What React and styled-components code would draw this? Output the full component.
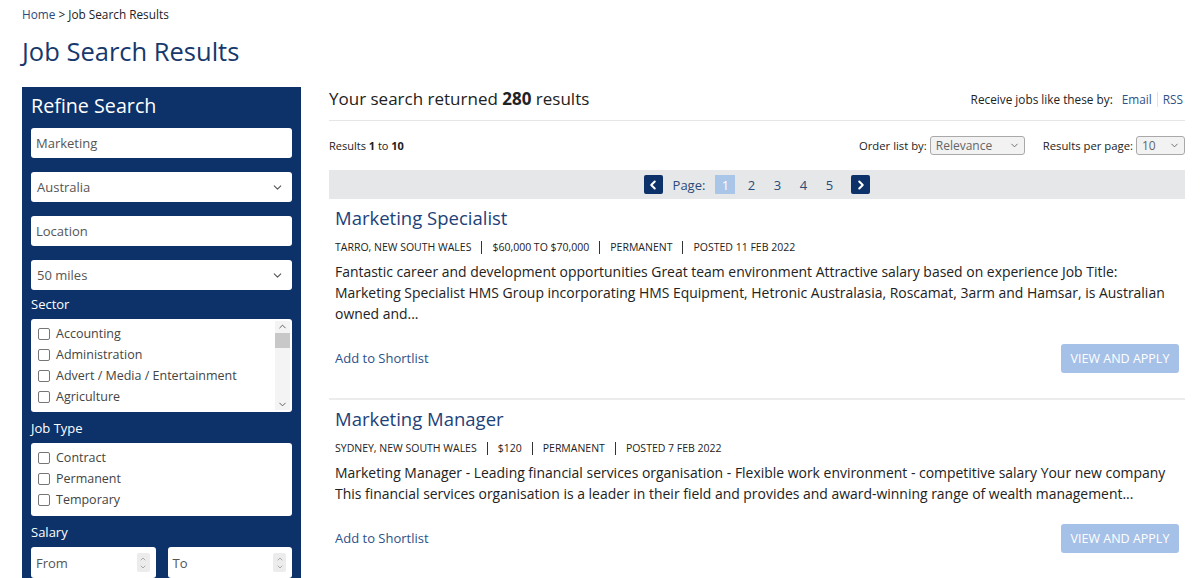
import React from "react";
import styled, { createGlobalStyle } from "styled-components";
import { ChevronDown, ChevronUp, ChevronLeft, ChevronRight } from "lucide-react";

const GlobalStyle = createGlobalStyle`
  body {
    margin: 0;
    background: #ffffff;
    font-family: "Open Sans", "Liberation Sans", sans-serif;
    color: #222;
  }
  * { box-sizing: border-box; }
`;

const Page = styled.div`
  padding: 6px 15px 0 22px;
  height: 578px;
  overflow: hidden;
`;

const Breadcrumb = styled.div`
  font-size: 11.8px;
  line-height: 16px;
  color: #222;

  a {
    color: #2c4a78;
    text-decoration: none;
  }
`;

const PageTitle = styled.h1`
  margin: 11px 0 0;
  font-size: 25.5px;
  line-height: 36px;
  font-weight: 400;
  color: #16386c;
`;

const Layout = styled.div`
  display: flex;
  gap: 28px;
  margin-top: 18px;
  align-items: flex-start;
`;

const Sidebar = styled.aside`
  width: 279px;
  flex-shrink: 0;
  background: #0c3269;
  padding: 5px 9px 20px;
  display: flex;
  flex-direction: column;
`;

const SidebarTitle = styled.h2`
  margin: 0 0 8px;
  font-size: 19.7px;
  line-height: 28px;
  font-weight: 400;
  color: #ffffff;
`;

const Field = styled.div`
  height: 30px;
  background: #fff;
  border-radius: 3px;
  display: flex;
  align-items: center;
  justify-content: space-between;
  padding: 0 8px 0 ${(p) => (p.$select ? "6px" : "5px")};
  font-size: 13px;
  color: #555;
  margin-bottom: ${(p) => (p.$last ? "5px" : "14px")};
`;

const FilterLabel = styled.div`
  font-size: 13px;
  line-height: 18px;
  color: #fff;
  margin-bottom: 6px;
`;

const ListBox = styled.div`
  background: #fff;
  border-radius: 3px;
  display: flex;
  height: ${(p) => p.$height}px;
  margin-bottom: 7px;
  overflow: hidden;
`;

const ListItems = styled.div`
  flex: 1;
  padding: 4px 0 0 7px;
`;

const CheckRow = styled.label`
  display: flex;
  align-items: center;
  gap: 6px;
  height: 21px;
  font-size: 12.5px;
  color: #444;
`;

const CheckBox = styled.span`
  width: 12px;
  height: 12px;
  border: 1px solid #767676;
  border-radius: 2px;
  background: #fff;
`;

const ScrollTrack = styled.div`
  width: 15px;
  margin: 2px 2px 2px 0;
  display: flex;
  flex-direction: column;
  align-items: center;
  background: #f4f4f4;
  color: #555;
`;

const ScrollThumb = styled.div`
  width: 15px;
  height: 15px;
  background: #c8c8c8;
  margin-top: 1px;
`;

const ScrollSpacer = styled.div`
  flex: 1;
`;

const SalaryRow = styled.div`
  display: flex;
  gap: 12px;
`;

const NumberField = styled.div`
  flex: 1;
  height: 31px;
  background: #fff;
  border-radius: 3px;
  display: flex;
  align-items: center;
  justify-content: space-between;
  padding: 0 6px 0 5px;
  font-size: 13px;
  color: #555;
`;

const Spinner = styled.div`
  width: 13px;
  height: 19px;
  background: #ececec;
  border-radius: 2px;
  display: flex;
  flex-direction: column;
  align-items: center;
  justify-content: center;
  color: #888;
`;

const Main = styled.main`
  flex: 1;
  min-width: 0;
`;

const ResultsHeader = styled.div`
  display: flex;
  justify-content: space-between;
  align-items: center;
  padding-bottom: 9px;
  border-bottom: 1px solid #e6e6e6;
`;

const ResultsCount = styled.div`
  font-size: 17px;
  line-height: 24px;
  color: #222;
`;

const Subscribe = styled.div`
  font-size: 11.8px;
  color: #222;
  display: flex;
  align-items: center;
  padding-right: 2px;
`;

const SubLink = styled.a`
  color: #2c5187;
  text-decoration: none;
  padding: 0 5px;
  border-left: ${(p) => (p.$divided ? "1px solid #dde4ee" : "none")};
  margin-left: ${(p) => (p.$divided ? "0" : "4px")};
  line-height: 15px;
  &:last-child { padding-right: 0; }
`;

const Controls = styled.div`
  display: flex;
  justify-content: space-between;
  align-items: center;
  margin-top: 15px;
  font-size: 11px;
  color: #222;
`;

const ControlGroup = styled.div`
  display: flex;
  align-items: center;
  gap: 18px;
`;

const ControlItem = styled.div`
  display: flex;
  align-items: center;
  gap: 3px;
  font-size: 11.3px;
`;

const MiniSelect = styled.div`
  width: ${(p) => p.$width}px;
  height: 19px;
  border: 1px solid #a9a9a9;
  border-radius: 3px;
  background: #f2f2f2;
  display: flex;
  align-items: center;
  justify-content: space-between;
  padding: 0 4px 0 5px;
  font-size: 12px;
  color: #666;
`;

const Pager = styled.div`
  margin-top: 15px;
  height: 29px;
  background: #e6e7e9;
  display: flex;
  align-items: center;
  justify-content: center;
  font-size: 13px;
  color: #2c4a78;
`;

const PagerArrow = styled.span`
  width: 19px;
  height: 19px;
  background: #0c3269;
  border-radius: 2px;
  color: #fff;
  display: flex;
  align-items: center;
  justify-content: center;
  margin: ${(p) => (p.$next ? "0 0 0 12px" : "0 10px 0 0")};
`;

const PageNum = styled.span`
  width: 20px;
  height: 19px;
  display: flex;
  align-items: center;
  justify-content: center;
  margin-left: ${(p) => (p.$first ? "10px" : "6px")};
  background: ${(p) => (p.$active ? "#a9c5e8" : "transparent")};
  color: ${(p) => (p.$active ? "#fff" : "#2c4a78")};
`;

const JobCard = styled.article`
  padding: 5px 6px 25px;
  border-bottom: 2px solid #ececec;
`;

const JobTitle = styled.h3`
  margin: 0;
  font-size: 18.5px;
  line-height: 28px;
  font-weight: 400;
  color: #1d4178;
`;

const Meta = styled.div`
  margin-top: 7px;
  display: flex;
  align-items: center;
  font-size: 10.5px;
  line-height: 16px;
  text-transform: uppercase;
  color: #222;
`;

const MetaSep = styled.span`
  width: 1px;
  height: 13px;
  background: #333;
  margin: 0 10px;
`;

const Description = styled.p`
  margin: 6px 0 0;
  font-size: 13.95px;
  line-height: 21px;
  color: #222;
`;

const Actions = styled.div`
  margin-top: 20px;
  display: flex;
  justify-content: space-between;
  align-items: center;
`;

const Shortlist = styled.a`
  font-size: 13px;
  color: #2c5187;
  text-decoration: none;
  margin-top: -2px;
`;

const ApplyButton = styled.button`
  width: 118px;
  height: 29px;
  border: none;
  border-radius: 3px;
  background: #a6c1e7;
  color: #fff;
  font-family: inherit;
  font-size: 12.5px;
  text-transform: uppercase;
  cursor: pointer;
`;

const sectors = ["Accounting", "Administration", "Advert / Media / Entertainment", "Agriculture"];
const jobTypes = ["Contract", "Permanent", "Temporary"];

const jobs = [
  {
    title: "Marketing Specialist",
    meta: ["Tarro, New South Wales", "$60,000 to $70,000", "Permanent", "Posted 11 Feb 2022"],
    text:
      "Fantastic career and development opportunities Great team environment Attractive salary based on experience Job Title: Marketing Specialist HMS Group incorporating HMS Equipment, Hetronic Australasia, Roscamat, 3arm and Hamsar, is Australian owned and...",
  },
  {
    title: "Marketing Manager",
    meta: ["Sydney, New South Wales", "$120", "Permanent", "Posted 7 Feb 2022"],
    text:
      "Marketing Manager - Leading financial services organisation - Flexible work environment - competitive salary Your new company This financial services organisation is a leader in their field and provides and award-winning range of wealth management...",
  },
];

function CheckList({ items, height, scroll }) {
  return (
    <ListBox $height={height}>
      <ListItems>
        {items.map((item) => (
          <CheckRow key={item}>
            <CheckBox />
            {item}
          </CheckRow>
        ))}
      </ListItems>
      {scroll && (
        <ScrollTrack>
          <ChevronUp size={11} strokeWidth={2} />
          <ScrollThumb />
          <ScrollSpacer />
          <ChevronDown size={11} strokeWidth={2} />
        </ScrollTrack>
      )}
    </ListBox>
  );
}

function Job({ job }) {
  return (
    <JobCard>
      <JobTitle>{job.title}</JobTitle>
      <Meta>
        {job.meta.map((m, i) => (
          <React.Fragment key={m}>
            {i > 0 && <MetaSep />}
            <span>{m}</span>
          </React.Fragment>
        ))}
      </Meta>
      <Description>{job.text}</Description>
      <Actions>
        <Shortlist href="#">Add to Shortlist</Shortlist>
        <ApplyButton>View and Apply</ApplyButton>
      </Actions>
    </JobCard>
  );
}

export default function App() {
  return (
    <>
      <GlobalStyle />
      <Page>
        <Breadcrumb>
          <a href="#">Home</a> &gt; Job Search Results
        </Breadcrumb>
        <PageTitle>Job Search Results</PageTitle>
        <Layout>
          <Sidebar>
            <SidebarTitle>Refine Search</SidebarTitle>
            <Field>Marketing</Field>
            <Field $select>
              Australia
              <ChevronDown size={13} color="#555" />
            </Field>
            <Field>Location</Field>
            <Field $select $last>
              50 miles
              <ChevronDown size={13} color="#555" />
            </Field>
            <FilterLabel>Sector</FilterLabel>
            <CheckList items={sectors} height={93} scroll />
            <FilterLabel>Job Type</FilterLabel>
            <CheckList items={jobTypes} height={73} />
            <FilterLabel>Salary</FilterLabel>
            <SalaryRow>
              <NumberField>
                From
                <Spinner>
                  <ChevronUp size={8} />
                  <ChevronDown size={8} />
                </Spinner>
              </NumberField>
              <NumberField>
                To
                <Spinner>
                  <ChevronUp size={8} />
                  <ChevronDown size={8} />
                </Spinner>
              </NumberField>
            </SalaryRow>
          </Sidebar>
          <Main>
            <ResultsHeader>
              <ResultsCount>
                Your search returned <b>280</b> results
              </ResultsCount>
              <Subscribe>
                Receive jobs like these by:
                <SubLink href="#">Email</SubLink>
                <SubLink href="#" $divided>
                  RSS
                </SubLink>
              </Subscribe>
            </ResultsHeader>
            <Controls>
              <div>
                Results <b>1</b> to <b>10</b>
              </div>
              <ControlGroup>
                <ControlItem>
                  Order list by:
                  <MiniSelect $width={95}>
                    Relevance
                    <ChevronDown size={11} />
                  </MiniSelect>
                </ControlItem>
                <ControlItem>
                  Results per page:
                  <MiniSelect $width={49}>
                    10
                    <ChevronDown size={11} />
                  </MiniSelect>
                </ControlItem>
              </ControlGroup>
            </Controls>
            <Pager>
              <PagerArrow>
                <ChevronLeft size={14} strokeWidth={3.5} />
              </PagerArrow>
              Page:
              <PageNum $first $active>1</PageNum>
              <PageNum>2</PageNum>
              <PageNum>3</PageNum>
              <PageNum>4</PageNum>
              <PageNum>5</PageNum>
              <PagerArrow $next>
                <ChevronRight size={14} strokeWidth={3.5} />
              </PagerArrow>
            </Pager>
            {jobs.map((job) => (
              <Job key={job.title} job={job} />
            ))}
          </Main>
        </Layout>
      </Page>
    </>
  );
}
